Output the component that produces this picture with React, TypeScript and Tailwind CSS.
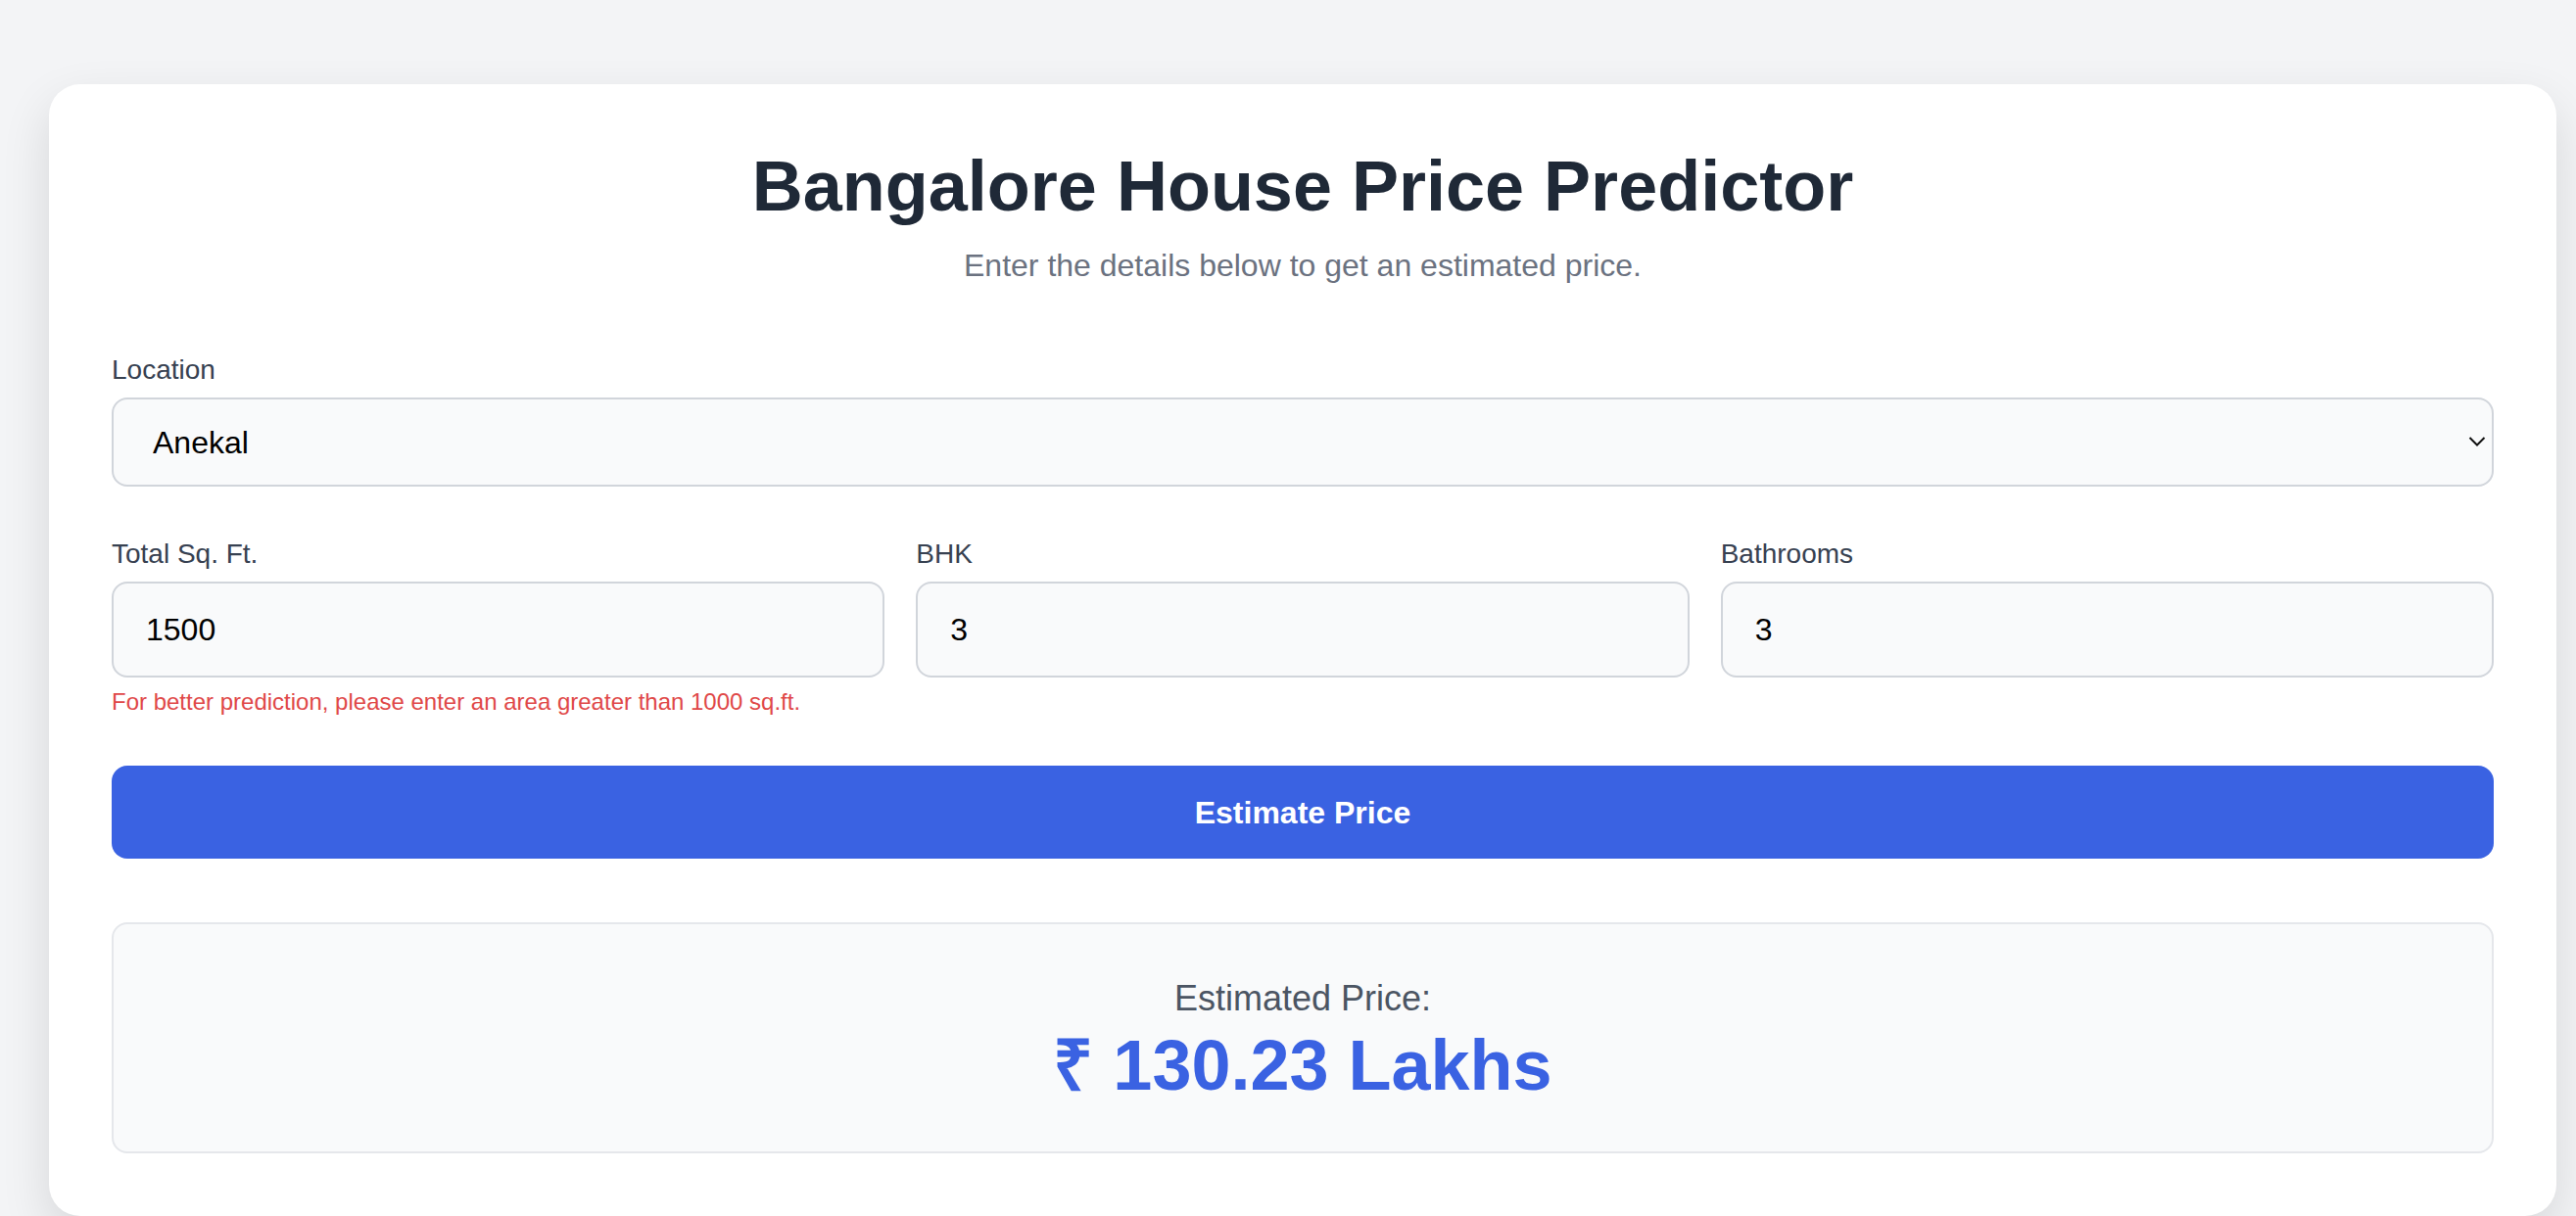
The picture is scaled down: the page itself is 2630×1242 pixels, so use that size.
import { useState } from "react";

const FIELDS = [
  { id: "sqft", label: "Total Sq. Ft." },
  { id: "bhk", label: "BHK" },
  { id: "bath", label: "Bathrooms" },
];

export default function App() {
  const [location, setLocation] = useState("Anekal");
  const [values, setValues] = useState<Record<string, string>>({ sqft: "1500", bhk: "3", bath: "3" });

  return (
    <div className="min-h-screen bg-[#f3f4f6] pt-[86px] pl-[50px]" style={{ fontFamily: '"Liberation Sans", Arial, sans-serif' }}>
      <div className="w-[2560px] bg-white rounded-[32px] shadow-[0_20px_50px_rgba(0,0,0,0.12)] p-16">
        {/* Header */}
        <div className="text-center mb-[63px]">
          <h1 className="text-[72px] leading-[80px] font-bold text-[#1f2937]">Bangalore House Price Predictor</h1>
          <p className="mt-[17px] text-[32px] leading-[48px] text-[#6b7280]">Enter the details below to get an estimated price.</p>
        </div>

        {/* Location */}
        <div>
          <label className="block text-[28px] leading-[40px] text-[#374151] mb-2">Location</label>
          <div className="relative">
            <select
              value={location}
              onChange={(e) => setLocation(e.target.value)}
              className="appearance-none w-full h-[91px] pl-[40px] pr-16 text-[32px] text-black bg-[#f9fafb] border-2 border-[#d1d5db] rounded-2xl outline-none"
            >
              <option>Anekal</option>
              <option>Whitefield</option>
              <option>Electronic City</option>
            </select>
            <svg className="absolute right-[8px] top-[39px] w-[18px] h-[12px] pointer-events-none" viewBox="0 0 18 12" fill="none">
              <path d="M1.5 2 L9 9.5 L16.5 2" stroke="#111" strokeWidth="2" />
            </svg>
          </div>
        </div>

        {/* Numbers */}
        <div className="grid grid-cols-3 gap-8 mt-[49px]">
          {FIELDS.map((f) => (
            <div key={f.id}>
              <label className="block text-[28px] leading-[40px] text-[#374151] mb-2">{f.label}</label>
              <input
                type="text"
                value={values[f.id]}
                onChange={(e) => setValues({ ...values, [f.id]: e.target.value })}
                className="w-full h-[98px] px-[33px] text-[32px] text-black bg-[#f9fafb] border-2 border-[#d1d5db] rounded-2xl outline-none"
              />
              {f.id === "sqft" && (
                <p className="mt-[9px] text-[24px] leading-[32px] text-[#e04848]">
                  For better prediction, please enter an area greater than 1000 sq.ft.
                </p>
              )}
            </div>
          ))}
        </div>

        <button className="mt-[49px] w-full h-[95px] rounded-2xl bg-[#3a62e2] text-white text-[32px] font-bold">
          Estimate Price
        </button>

        {/* Result */}
        <div className="mt-[65px] bg-[#f9fafb] border-2 border-[#e5e7eb] rounded-2xl p-12 text-center">
          <p className="text-[36px] leading-[56px] text-[#4b5563]">Estimated Price:</p>
          <p className="text-[72px] leading-[80px] font-bold text-[#3a62e2]">₹ 130.23 Lakhs</p>
        </div>
      </div>
    </div>
  );
}
